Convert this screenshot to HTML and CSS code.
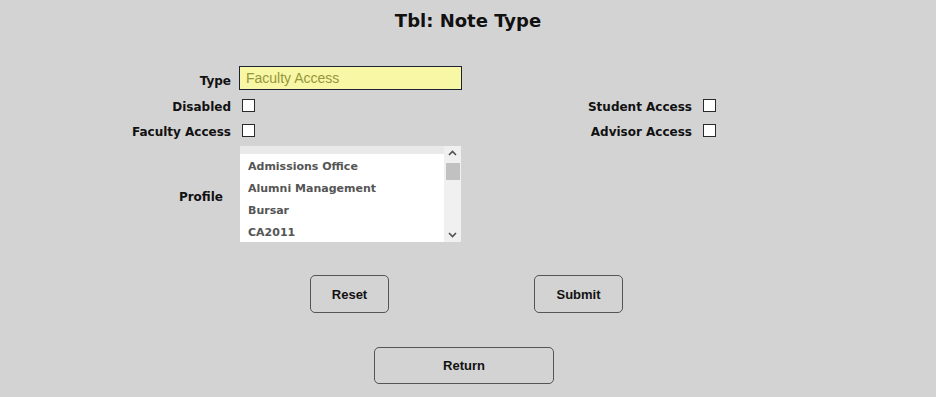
FILE: index.html
```html
<!DOCTYPE html>
<html lang="en">
  <head>
    <title>Tbl: Note Type</title>
    <link rel="stylesheet" href="styles.css">
  </head>
  <body>
    <h1 class="title">Tbl: Note Type</h1>

    <!-- main form grid -->
    <div class="form">
      <label class="label">Type</label>
      <input class="text-input" type="text" value="Faculty Access">
      <div></div>
      <div></div>

      <label class="label">Disabled</label>
      <div><input class="check" type="checkbox"></div>
      <label class="label">Student Access</label>
      <div><input class="check" type="checkbox"></div>

      <label class="label">Faculty Access</label>
      <div><input class="check" type="checkbox"></div>
      <label class="label">Advisor Access</label>
      <div><input class="check" type="checkbox"></div>

      <label class="label profile-label">Profile</label>
      <div class="listbox">
        <div class="list-items">
          <div class="list-item partial"></div>
          <div class="list-item">Admissions Office</div>
          <div class="list-item">Alumni Management</div>
          <div class="list-item">Bursar</div>
          <div class="list-item">CA2011</div>
        </div>
        <div class="scrollbar">
          <svg class="arrow" width="17" height="14" viewBox="0 0 17 14">
            <path d="M5 9 L8.5 5.5 L12 9" fill="none" stroke="#505050" stroke-width="1.6"/>
          </svg>
          <div class="thumb"></div>
          <div class="track"></div>
          <svg class="arrow" width="17" height="14" viewBox="0 0 17 14">
            <path d="M5 5 L8.5 8.5 L12 5" fill="none" stroke="#505050" stroke-width="1.6"/>
          </svg>
        </div>
      </div>
      <div></div>
      <div></div>
    </div>

    <!-- buttons -->
    <div class="button-row">
      <button class="btn btn-reset">Reset</button>
      <button class="btn btn-submit">Submit</button>
    </div>
    <div class="return-row">
      <button class="btn btn-return">Return</button>
    </div>
  </body>
</html>
```

FILE: styles.css
```css
* {
  box-sizing: border-box;
}

body {
  margin: 0;
  background-color: #d3d3d3;
  font-family: "DejaVu Sans", sans-serif;
  color: #111;
}

.title {
  margin: 0;
  padding-top: 9px;
  height: 66px;
  text-align: center;
  font-size: 18px;
  font-weight: bold;
  line-height: 24px;
}

.form {
  display: grid;
  grid-template-columns: 231px 222px 223px 30px;
  column-gap: 8px;
  align-items: center;
}

.label {
  height: 25px;
  padding-top: 3px;
  text-align: right;
  font-size: 12px;
  font-weight: bold;
  line-height: 22px;
}

.profile-label {
  padding-right: 8px;
  margin-top: 6px;
}

.text-input {
  width: 223px;
  height: 24px;
  margin: 0 0 3px 0;
  padding: 0 6px;
  border: 1px solid #1c2233;
  background-color: #f7f7a6;
  color: #96963a;
  font-family: "Liberation Sans", Arial, sans-serif;
  font-size: 14px;
  outline: none;
}

.check {
  appearance: none;
  display: block;
  width: 13px;
  height: 13px;
  margin: 0 0 0 3px;
  border: 1px solid #2a2a2a;
  background-color: #fff;
}

.listbox {
  display: flex;
  width: 221px;
  height: 96px;
  margin: 3px 0 0 1px;
  background-color: #fff;
}

.list-items {
  flex: 1;
}

.list-item {
  height: 22px;
  padding: 3px 0 0 8px;
  line-height: 19px;
  font-size: 11px;
  font-weight: bold;
  color: #555;
}

.list-item.partial {
  height: 8px;
  padding: 0;
  background-color: #e9e9e9;
}

.scrollbar {
  width: 17px;
  display: flex;
  flex-direction: column;
  background-color: #f0f0f0;
}

.arrow {
  display: block;
}

.thumb {
  height: 17px;
  margin: 3px 1px 0 2px;
  background-color: #c1c1c1;
}

.track {
  flex: 1;
}

.button-row {
  display: flex;
  gap: 145px;
  padding-left: 310px;
  margin-top: 33px;
}

.btn {
  height: 38px;
  border: 1px solid #555;
  border-radius: 5px;
  background-color: transparent;
  font-family: "Liberation Sans", Arial, sans-serif;
  font-size: 13px;
  font-weight: bold;
  color: #111;
}

.btn-reset {
  width: 79px;
}

.btn-submit {
  width: 89px;
}

.return-row {
  padding-left: 374px;
  margin-top: 34px;
}

.btn-return {
  width: 180px;
  height: 37px;
}
```
